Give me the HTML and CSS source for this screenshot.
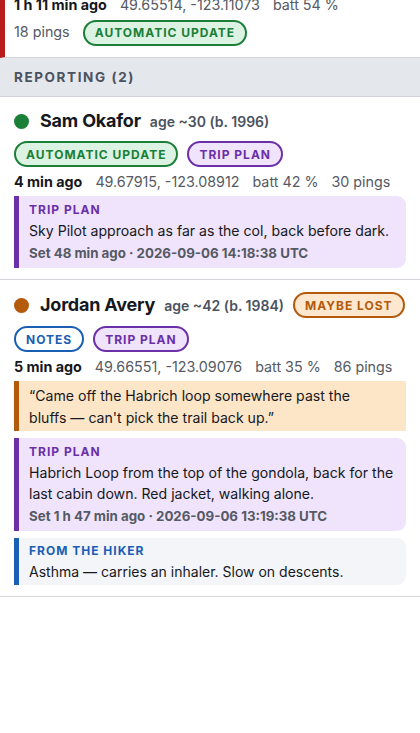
FILE: index.html
```html
<!DOCTYPE html>
<html lang="en">
<head>
<meta charset="utf-8">
<title>Reporting</title>
<link rel="stylesheet" href="styles.css">
</head>
<body>
<main class="feed">
  <section class="card card-alert">
    <div class="meta meta-wrap">
      <span class="meta-time">1 h 11 min ago</span>
      <span>49.65514, -123.11073</span>
      <span>batt 54 %</span>
      <span>18 pings</span>
      <span class="badge badge-green">Automatic update</span>
    </div>
  </section>

  <div class="group-head">Reporting (2)</div>

  <article class="card">
    <div class="name-row">
      <span class="dot dot-green"></span>
      <span class="name">Sam Okafor</span>
      <span class="age">age ~30 (b. 1996)</span>
    </div>
    <div class="badges">
      <span class="badge badge-green">Automatic update</span>
      <span class="badge badge-purple">Trip plan</span>
    </div>
    <div class="meta">
      <span class="meta-time">4 min ago</span>
      <span>49.67915, -123.08912</span>
      <span>batt 42 %</span>
      <span>30 pings</span>
    </div>
    <div class="note note-plan">
      <div class="note-label">Trip plan</div>
      <div class="note-body">Sky Pilot approach as far as the col, back before dark.</div>
      <div class="note-foot">Set 48 min ago · 2026-09-06 14:18:38 UTC</div>
    </div>
  </article>

  <article class="card">
    <div class="name-row">
      <span class="dot dot-orange"></span>
      <span class="name">Jordan Avery</span>
      <span class="age">age ~42 (b. 1984)</span>
      <span class="badge badge-orange">Maybe lost</span>
    </div>
    <div class="badges">
      <span class="badge badge-blue">Notes</span>
      <span class="badge badge-purple">Trip plan</span>
    </div>
    <div class="meta">
      <span class="meta-time">5 min ago</span>
      <span>49.66551, -123.09076</span>
      <span>batt 35 %</span>
      <span>86 pings</span>
    </div>
    <div class="note note-quote">
      <div class="note-body">“Came off the Habrich loop somewhere past the bluffs — can't pick the trail back up.”</div>
    </div>
    <div class="note note-plan">
      <div class="note-label">Trip plan</div>
      <div class="note-body">Habrich Loop from the top of the gondola, back for the last cabin down. Red jacket, walking alone.</div>
      <div class="note-foot">Set 1 h 47 min ago · 2026-09-06 13:19:38 UTC</div>
    </div>
    <div class="note note-hiker">
      <div class="note-label">From the hiker</div>
      <div class="note-body">Asthma — carries an inhaler. Slow on descents.</div>
    </div>
  </article>
</main>
</body>
</html>
```

FILE: styles.css
```css
* { box-sizing: border-box; }

html, body {
  margin: 0;
  padding: 0;
  background: #ffffff;
}

body {
  font-family: Inter, "Noto Sans", "Liberation Sans", sans-serif;
  color: #16181d;
  font-size: 14px;
}

.feed {
  margin-top: -17px;
}

.card {
  padding: 12px 14px 11px 14px;
  border-bottom: 1px solid #d4d6db;
}

.card-alert {
  border-left: 5px solid #b91c1c;
  padding: 12px 20px 11px 9px;
}

.group-head {
  background: #e4e7ec;
  color: #4b5260;
  font-weight: 700;
  font-size: 13.5px;
  letter-spacing: 1.6px;
  text-transform: uppercase;
  padding: 0 14px;
  height: 39px;
  display: flex;
  align-items: center;
  border-bottom: 1px solid #d0d3d9;
}

.name-row {
  display: flex;
  align-items: center;
  gap: 9px;
}

.dot {
  width: 15px;
  height: 15px;
  border-radius: 50%;
  margin-right: 2px;
  flex: none;
}

.dot-green { background: #1a7f37; }
.dot-orange { background: #b45a0c; }

.name {
  font-size: 18px;
  line-height: 24px;
  font-weight: 700;
  color: #16181d;
  letter-spacing: -0.2px;
}

.age {
  font-size: 14px;
  font-weight: 600;
  color: #4b5260;
}

.badges {
  display: flex;
  gap: 9px;
  margin-top: 8px;
}

.badge {
  display: inline-flex;
  align-items: center;
  height: 26px;
  padding: 0 10px;
  border: 2px solid currentColor;
  border-radius: 13px;
  font-size: 12px;
  font-weight: 700;
  letter-spacing: 1px;
  text-transform: uppercase;
  white-space: nowrap;
}

.badge-green { color: #1a7f37; background: #dcf2e2; }
.badge-purple { color: #6b2fa8; background: #efe4fb; }
.badge-orange { color: #b45a0c; background: #fde8cf; }
.badge-blue { color: #1a5fb4; background: #ffffff; }

.meta {
  display: flex;
  flex-wrap: wrap;
  align-items: center;
  column-gap: 13px;
  row-gap: 5px;
  margin-top: 5px;
  line-height: 20px;
  color: #555a64;
  font-size: 14.3px;
}

.meta-wrap {
  margin-top: 0;
  align-items: baseline;
}

.meta-time {
  color: #16181d;
  font-weight: 700;
}

.note {
  margin-top: 4px;
  border-left: 5px solid;
  border-radius: 0 9px 9px 0;
  padding: 6px 6px 5px 10px;
}

.card .note + .note { margin-top: 7px; }

.note-label {
  font-size: 12px;
  font-weight: 700;
  letter-spacing: 1px;
  text-transform: uppercase;
  line-height: 16px;
}

.note-body {
  font-size: 14.1px;
  line-height: 21px;
  color: #16181d;
  margin-top: 2px;
}

.note-foot {
  margin-top: 2px;
  font-size: 13.3px;
  font-weight: 700;
  color: #555a64;
  line-height: 20px;
}

.note-plan { background: #efe4fb; border-left-color: #6b2fa8; }
.note-plan .note-label { color: #6b2fa8; }

.note-quote {
  background: #fde6c8;
  border-left-color: #b45a0c;
  border-radius: 0;
  padding: 4px 24px 3px 10px;
}
.note-quote .note-body { margin-top: 0; line-height: 21.5px; }

.note-hiker { background: #f3f5f9; border-left-color: #1a5fb4; padding: 5px 12px 3px 10px; }
.note-hiker .note-label { color: #1a5fb4; }
.note-hiker .note-body { font-size: 14px; }
```
